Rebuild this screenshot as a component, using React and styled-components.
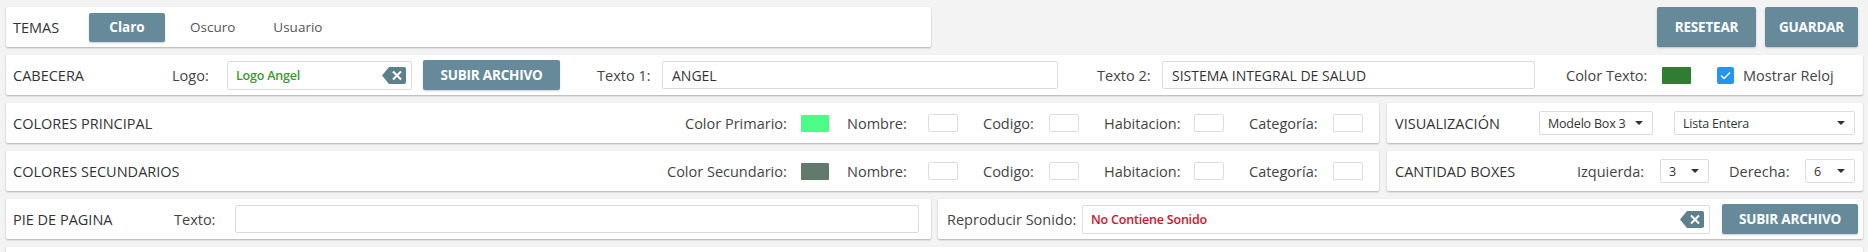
import React from "react";
import styled, { createGlobalStyle } from "styled-components";

const GlobalStyle = createGlobalStyle`
  * { box-sizing: border-box; }
  body {
    margin: 0;
    background: #f3f3f3;
    font-family: "Open Sans", "Liberation Sans", sans-serif;
    color: #444;
  }
`;

const Page = styled.div`
  display: flex;
  flex-direction: column;
  gap: 8px;
  padding: 7px 5px 0 6px;
`;

const Row = styled.div`
  display: grid;
  grid-template-columns: ${(p) => p.$cols || "1fr"};
  gap: ${(p) => p.$gap || 7}px;
  height: 40px;
`;

const Card = styled.div`
  display: flex;
  align-items: center;
  height: 40px;
  padding: 0 ${(p) => p.$pr ?? 12}px 0 ${(p) => p.$pl ?? 7}px;
  background: #fff;
  border-radius: 2px;
  box-shadow: 0 1px 2px rgba(0, 0, 0, 0.28);
`;

const Actions = styled.div`
  display: flex;
  justify-content: flex-end;
  gap: 9px;
  padding-right: 5px;
`;

const Title = styled.span`
  flex-shrink: 0;
  width: ${(p) => p.$w}px;
  font-size: 14.5px;
  color: #333;
  white-space: nowrap;
`;

const Label = styled.span`
  flex-shrink: 0;
  width: ${(p) => (p.$w ? `${p.$w}px` : "auto")};
  margin-left: ${(p) => p.$ml || 0}px;
  font-size: 14.5px;
  color: #444;
  white-space: nowrap;
`;

const Button = styled.button`
  flex-shrink: 0;
  width: ${(p) => p.$w}px;
  height: ${(p) => p.$h || 30}px;
  margin-left: ${(p) => p.$ml || 0}px;
  border: none;
  border-radius: 2px;
  background: #668a99;
  color: #fff;
  font-family: inherit;
  font-size: 13.5px;
  font-weight: 700;
  letter-spacing: -0.2px;
  box-shadow: 0 1px 2px rgba(0, 0, 0, 0.2);
  cursor: pointer;
`;

const Tabs = styled.div`
  display: flex;
  align-items: center;
`;

const Tab = styled.button`
  height: 29px;
  width: ${(p) => (p.$active ? "76px" : "auto")};
  margin-right: ${(p) => (p.$active ? 6 : 0)}px;
  padding: 0 19px;
  border: none;
  border-radius: 2px;
  background: ${(p) => (p.$active ? "#668a99" : "transparent")};
  color: ${(p) => (p.$active ? "#fff" : "#555")};
  font-family: inherit;
  font-size: 13.5px;
  font-weight: ${(p) => (p.$active ? 700 : 400)};
  box-shadow: ${(p) => (p.$active ? "0 1px 2px rgba(0,0,0,0.2)" : "none")};
`;

const TextInput = styled.input`
  flex-shrink: 0;
  width: ${(p) => p.$w}px;
  height: 28px;
  padding: 0 9px;
  border: 1px solid #dcdcdc;
  border-radius: 2px;
  background: #fff;
  color: #333;
  font-family: inherit;
  font-size: 14px;
  outline: none;
`;

const FileField = styled.div`
  flex-shrink: 0;
  display: flex;
  align-items: center;
  justify-content: space-between;
  width: ${(p) => p.$w}px;
  height: 29px;
  padding: 0 5px 0 8px;
  border: 1px solid #dcdcdc;
  border-radius: 2px;
  background: #fff;
`;

const FileName = styled.span`
  font-size: 12.5px;
  font-weight: 600;
  color: ${(p) => p.$color};
  letter-spacing: -0.2px;
`;

const Swatch = styled.span`
  flex-shrink: 0;
  width: ${(p) => p.$w || 28}px;
  height: 17px;
  border-radius: 1px;
  background: ${(p) => p.$color};
`;

const SmallBox = styled.span`
  flex-shrink: 0;
  width: 30px;
  height: 18px;
  border: 1px solid #dcdcdc;
  border-radius: 2px;
  background: #fff;
`;

const Group = styled.div`
  display: flex;
  align-items: center;
  margin-left: auto;
`;

const Select = styled.div`
  flex-shrink: 0;
  display: flex;
  align-items: center;
  justify-content: space-between;
  width: ${(p) => p.$w}px;
  height: 24px;
  margin-left: ${(p) => p.$ml || 0}px;
  padding: 0 9px 0 8px;
  border: 1px solid #dcdcdc;
  border-radius: 2px;
  background: #fff;
  font-size: 12.5px;
  letter-spacing: -0.2px;
  color: #333;
  white-space: nowrap;
`;

const Caret = styled.span`
  width: 0;
  height: 0;
  border-left: 4px solid transparent;
  border-right: 4px solid transparent;
  border-top: 4px solid #333;
`;

const Check = styled.span`
  flex-shrink: 0;
  display: flex;
  align-items: center;
  justify-content: center;
  width: 17px;
  height: 17px;
  margin-left: ${(p) => p.$ml || 0}px;
  border-radius: 2px;
  background: #2196f3;
`;

const ClearIcon = () => (
  <svg width="24" height="17" viewBox="0 0 24 17">
    <path d="M7 0h15a2 2 0 0 1 2 2v13a2 2 0 0 1-2 2H7L0 8.5z" fill="#5d7f8e" />
    <path d="M11 4.5l8 8M19 4.5l-8 8" stroke="#fff" strokeWidth="2" />
  </svg>
);

const colorFields = ["Nombre:", "Codigo:", "Habitacion:", "Categoría:"];
const fieldWidths = [81, 66, 90, 84];

const ColorRow = ({ title, label, labelW, color }) => (
  <Card $pr={16}>
    <Title>{title}</Title>
    <Group>
      <Label $w={labelW}>{label}</Label>
      <Swatch $color={color} />
      {colorFields.map((f, i) => (
        <React.Fragment key={f}>
          <Label $w={fieldWidths[i]} $ml={i === 0 ? 18 : 25}>
            {f}
          </Label>
          <SmallBox />
        </React.Fragment>
      ))}
    </Group>
  </Card>
);

export default function App() {
  return (
    <>
      <GlobalStyle />
      <Page>
        <Row $cols="1fr 1fr">
          <Card>
            <Title $w={76}>TEMAS</Title>
            <Tabs>
              <Tab $active>Claro</Tab>
              <Tab>Oscuro</Tab>
              <Tab>Usuario</Tab>
            </Tabs>
          </Card>
          <Actions>
            <Button $w={99} $h={40}>RESETEAR</Button>
            <Button $w={93} $h={40}>GUARDAR</Button>
          </Actions>
        </Row>

        <Row>
          <Card>
            <Title $w={159}>CABECERA</Title>
            <Label $w={55}>Logo:</Label>
            <FileField $w={185}>
              <FileName $color="#3a9a2e">Logo Angel</FileName>
              <ClearIcon />
            </FileField>
            <Button $w={137} $ml={11}>SUBIR ARCHIVO</Button>
            <Label $w={65} $ml={37}>Texto 1:</Label>
            <TextInput $w={396} defaultValue="ANGEL" readOnly />
            <Label $w={65} $ml={39}>Texto 2:</Label>
            <TextInput $w={373} defaultValue="SISTEMA INTEGRAL DE SALUD" readOnly />
            <Label $w={96} $ml={31}>Color Texto:</Label>
            <Swatch $w={29} $color="#2e7d32" />
            <Check $ml={26}>
              <svg width="11" height="9" viewBox="0 0 11 9">
                <path d="M1 4.5l3 3L10 1.5" stroke="#fff" strokeWidth="1.4" fill="none" />
              </svg>
            </Check>
            <Label $ml={9}>Mostrar Reloj</Label>
          </Card>
        </Row>

        <Row $cols="1fr 476px" $gap={8}>
          <ColorRow title="COLORES PRINCIPAL" label="Color Primario:" labelW={116} color="#4cfc86" />
          <Card $pl={8} $pr={8}>
            <Title $w={144}>VISUALIZACIÓN</Title>
            <Select $w={114}>
              Modelo Box 3 <Caret />
            </Select>
            <Select $w={181} $ml={21}>
              Lista Entera <Caret />
            </Select>
          </Card>
        </Row>

        <Row $cols="1fr 476px" $gap={8}>
          <ColorRow title="COLORES SECUNDARIOS" label="Color Secundario:" labelW={134} color="#607b6b" />
          <Card $pl={8} $pr={8}>
            <Title $w={182}>CANTIDAD BOXES</Title>
            <Label $w={83}>Izquierda:</Label>
            <Select $w={49}>
              3 <Caret />
            </Select>
            <Label $w={76} $ml={20}>Derecha:</Label>
            <Select $w={50}>
              6 <Caret />
            </Select>
          </Card>
        </Row>

        <Row $cols="1fr 1fr">
          <Card>
            <Title $w={161}>PIE DE PAGINA</Title>
            <Label $w={61}>Texto:</Label>
            <TextInput $w={684} readOnly />
          </Card>
          <Card $pl={9} $pr={5}>
            <Label $w={135}>Reproducir Sonido:</Label>
            <FileField $w={628}>
              <FileName $color="#d0132b">No Contiene Sonido</FileName>
              <ClearIcon />
            </FileField>
            <Button $w={136} $ml={12}>SUBIR ARCHIVO</Button>
          </Card>
        </Row>

        <Row>
          <Card />
        </Row>
      </Page>
    </>
  );
}
